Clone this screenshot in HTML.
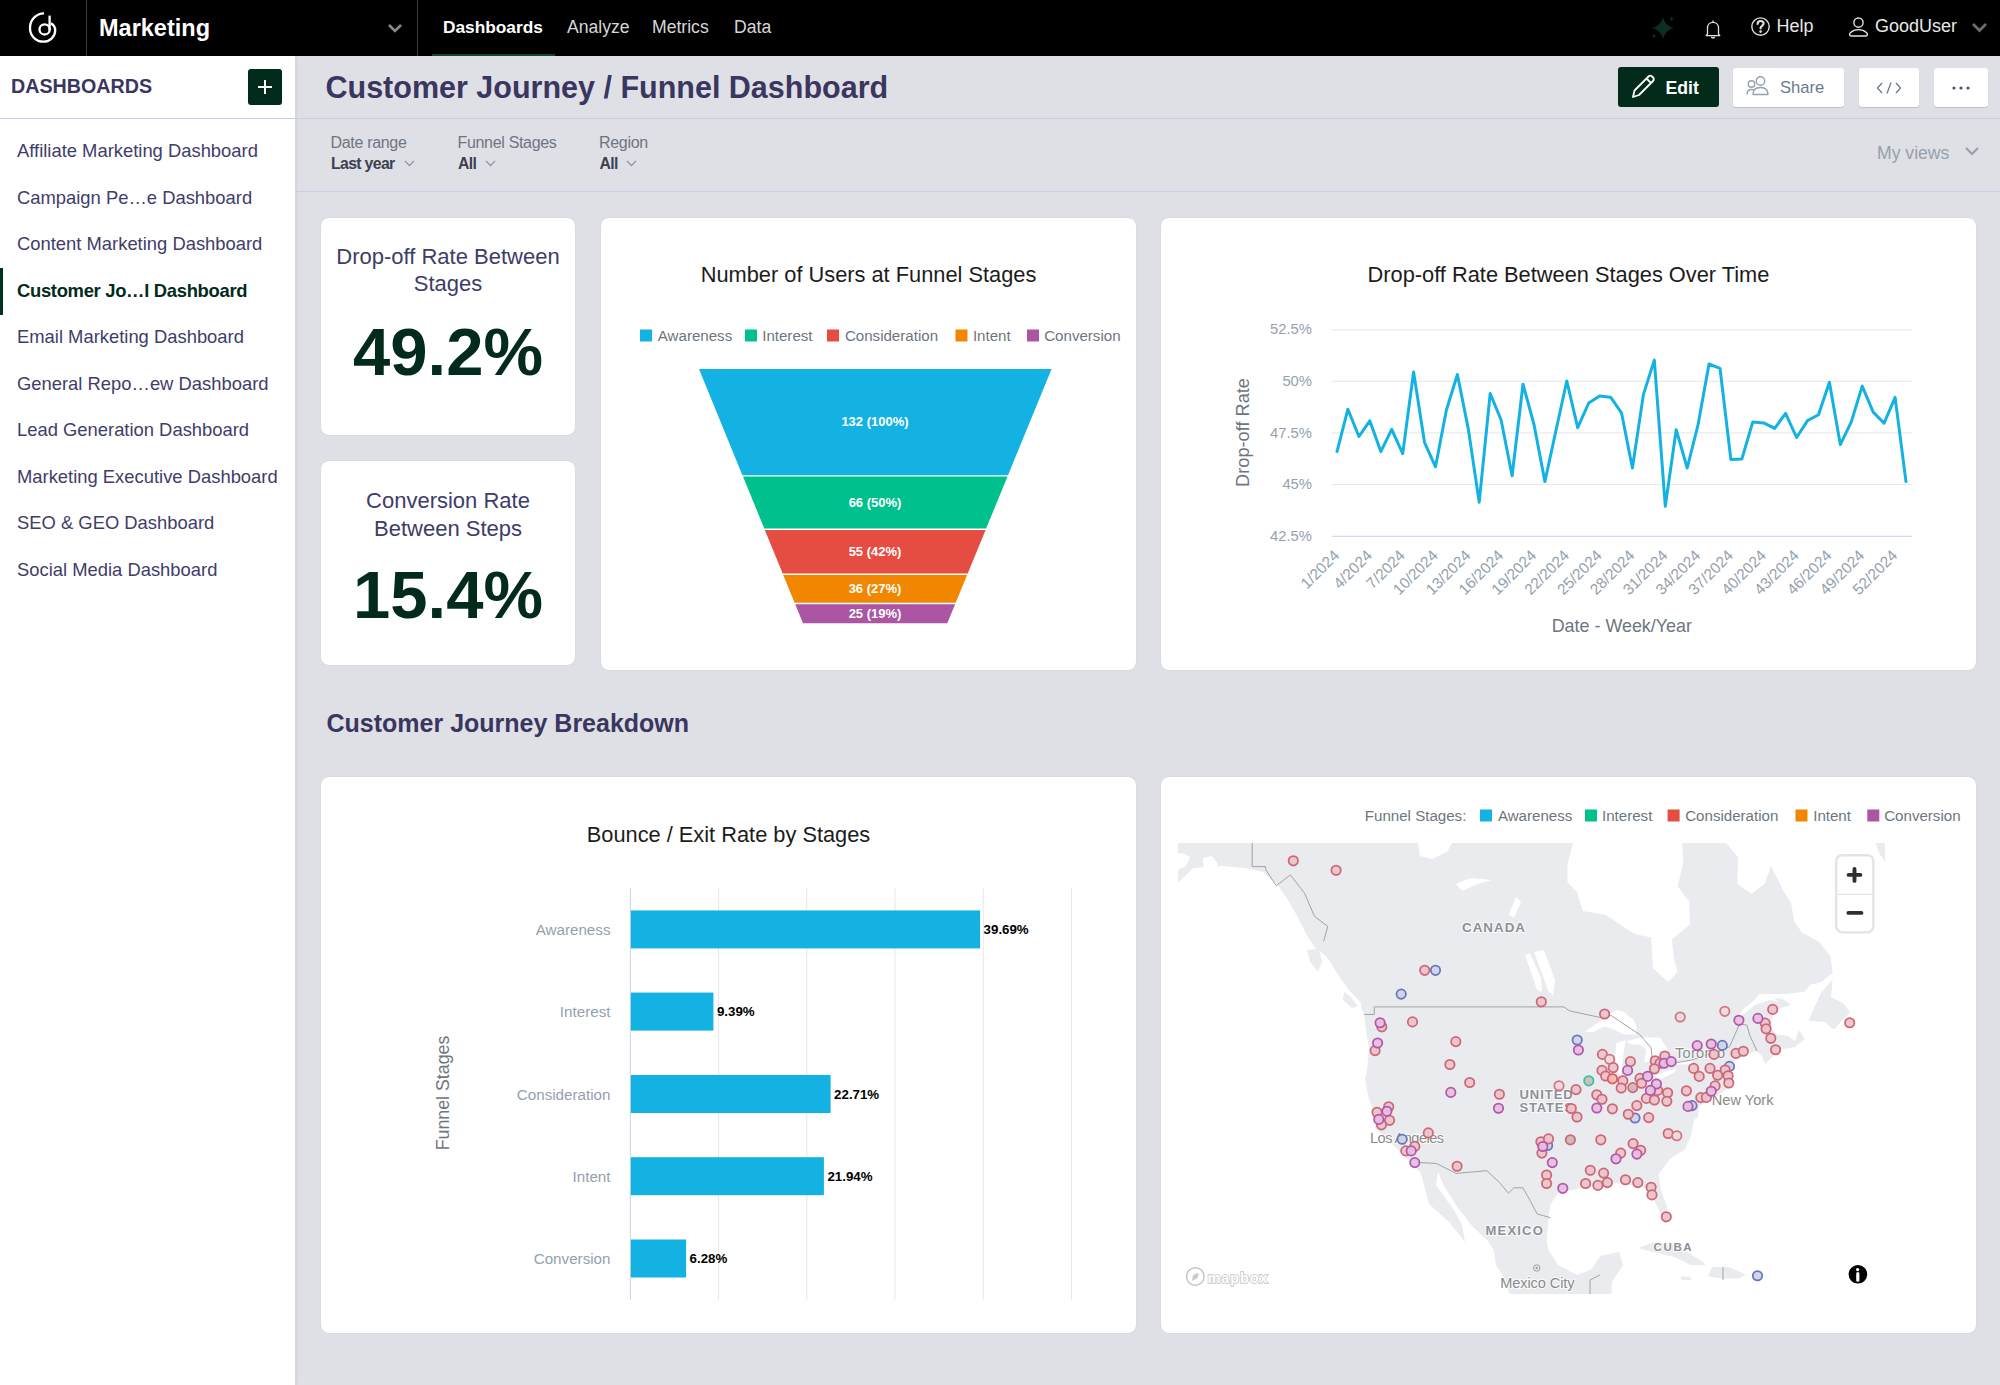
<!DOCTYPE html>
<html><head><meta charset="utf-8">
<style>
*{margin:0;padding:0;box-sizing:border-box}
html,body{width:2000px;height:1385px;overflow:hidden;background:#dfe0e6;font-family:"Liberation Sans",sans-serif}
.a{position:absolute;white-space:nowrap}
#top{position:absolute;left:0;top:0;width:2000px;height:56px;background:#000}
#side{position:absolute;left:0;top:56px;width:296px;height:1329px;background:#fff;border-right:1px solid #d6d7de;box-shadow:1px 0 2px rgba(0,0,0,0.06)}
.card{position:absolute;background:#fff;border-radius:8px;box-shadow:0 0 1px rgba(40,40,80,0.18)}
.nav{color:#d6d6d6;font-size:17.6px;line-height:17.6px;top:19px}
.si{left:17px;font-size:18.4px;line-height:18.4px;color:#3f3d69}
.flab{font-size:16px;line-height:16px;color:#6d7582;top:135.4px;letter-spacing:-0.32px}
.fval{font-size:15.8px;line-height:15.8px;color:#3c4150;font-weight:bold;top:155.9px;letter-spacing:-0.65px}
.ct{font-size:21.8px;line-height:22px;color:#1c1c1c;text-align:center}
.leg{font-size:14.8px;line-height:15px;color:#6d7680}
.sq{position:absolute;width:12px;height:12px}
.ax{font-size:14.5px;line-height:15px;color:#94a1ae}
</style></head><body>
<div id="top">
  <!-- logo -->
  <svg class="a" style="left:0;top:0" width="70" height="56" viewBox="0 0 70 56">
    <path d="M44 13.3 C36 13.3 30 20 30 28 C30 36 36 41.7 43.5 41.7 C50 41.7 55.2 36.5 55.2 30.5 C55.2 27 53.5 24.6 50.6 23.4" fill="none" stroke="#fff" stroke-width="2.3"/>
    <path d="M49.6 15.6 V30" fill="none" stroke="#fff" stroke-width="2.3"/>
    <circle cx="44.6" cy="29.4" r="5.1" fill="none" stroke="#fff" stroke-width="2.3"/>
  </svg>
  <div class="a" style="left:86px;top:0;width:1px;height:56px;background:#3a3a3a"></div>
  <div class="a" style="left:99px;top:16.9px;font-size:23.5px;line-height:23.5px;color:#fff;font-weight:bold">Marketing</div>
  <svg class="a" style="left:386px;top:21px" width="18" height="14" viewBox="0 0 18 14"><path d="M3 4 L9 10 L15 4" fill="none" stroke="#8a8a8a" stroke-width="2.6"/></svg>
  <div class="a" style="left:417px;top:0;width:1px;height:56px;background:#3a3a3a"></div>
  <div class="a nav" style="left:443px;color:#fff;font-weight:bold;font-size:17.3px">Dashboards</div>
  <div class="a" style="left:432px;top:54px;width:123px;height:2px;background:#0d4a30"></div>
  <div class="a nav" style="left:567px">Analyze</div>
  <div class="a nav" style="left:652px">Metrics</div>
  <div class="a nav" style="left:734px">Data</div>
  <!-- right icons -->
  <svg class="a" style="left:1640px;top:10px" width="45" height="40" viewBox="0 0 45 40">
    <path d="M23 7.5 Q25.2 15.8 33.8 18 Q25.2 20.2 23 28.8 Q20.8 20.2 12.2 18 Q20.8 15.8 23 7.5Z" fill="#0b2f21"/>
    <path d="M31.6 6.5 Q32 8.6 34 9 Q32 9.4 31.6 11.5 Q31.2 9.4 29.2 9 Q31.2 8.6 31.6 6.5Z" fill="#0b2f21"/>
    <path d="M14 23.8 Q14.4 25.6 16.2 26 Q14.4 26.4 14 28.2 Q13.6 26.4 11.8 26 Q13.6 25.6 14 23.8Z" fill="#0b2f21"/>
  </svg>
  <svg class="a" style="left:1702px;top:17px" width="22" height="24" viewBox="0 0 22 24">
    <path d="M5.5 17 V11 C5.5 7.6 7.8 5.3 11 5.3 C14.2 5.3 16.5 7.6 16.5 11 V17 L17.8 18.6 H4.2 Z" fill="none" stroke="#e0e0e0" stroke-width="1.3" stroke-linejoin="round"/>
    <path d="M11 3.4 V5.3" stroke="#e0e0e0" stroke-width="1.3"/>
    <path d="M9.3 19.8 A1.8 1.8 0 0 0 12.7 19.8" fill="none" stroke="#e0e0e0" stroke-width="1.3"/>
  </svg>
  <svg class="a" style="left:1749px;top:15px" width="23" height="23" viewBox="0 0 23 23">
    <circle cx="11.5" cy="11.6" r="8.7" fill="none" stroke="#e0e0e0" stroke-width="1.4"/>
    <path d="M8.6 9 C8.6 7 9.9 6 11.6 6 C13.3 6 14.6 7 14.6 8.6 C14.6 10.6 12 10.8 11.6 12.6 V13.4" fill="none" stroke="#e0e0e0" stroke-width="2.1" stroke-linecap="round"/>
    <circle cx="11.6" cy="16.6" r="1.3" fill="#e0e0e0"/>
  </svg>
  <div class="a nav" style="left:1776.5px;font-size:18px;line-height:18px;top:17px;color:#e8e8e8">Help</div>
  <svg class="a" style="left:1847px;top:15px" width="23" height="23" viewBox="0 0 23 23">
    <circle cx="11.5" cy="7.6" r="4.6" fill="none" stroke="#e0e0e0" stroke-width="1.4"/>
    <path d="M4.2 21 C2.2 21 2.2 19 3.6 17.6 C5.6 15.6 8.5 14.6 11.5 14.6 C14.5 14.6 17.4 15.6 19.4 17.6 C20.8 19 20.8 21 18.8 21 Z" fill="none" stroke="#e0e0e0" stroke-width="1.4" stroke-linejoin="round"/>
  </svg>
  <div class="a nav" style="left:1875px;font-size:18px;line-height:18px;top:17px;color:#e8e8e8">GoodUser</div>
  <svg class="a" style="left:1970px;top:20px" width="19" height="14" viewBox="0 0 19 14"><path d="M3 4 L9.5 10.5 L16 4" fill="none" stroke="#6e6e6e" stroke-width="2.7"/></svg>
</div>

<div id="side">
  <div class="a" style="left:11px;top:20.6px;font-size:19.7px;line-height:19.7px;color:#3a3660;font-weight:bold">DASHBOARDS</div>
  <div class="a" style="left:248px;top:13px;width:34px;height:36px;background:#032b1c;border-radius:3px"></div>
  <svg class="a" style="left:254px;top:20px" width="22" height="22" viewBox="0 0 22 22"><path d="M11 4 V18 M4 11 H18" stroke="#fff" stroke-width="2"/></svg>
  <div class="a" style="left:0;top:62px;width:295px;height:1px;background:#c9cde6"></div>
</div>
<!-- sidebar items (page coordinates) -->
<div class="a si" style="top:142.2px">Affiliate Marketing Dashboard</div>
<div class="a si" style="top:188.7px">Campaign Pe…e Dashboard</div>
<div class="a si" style="top:235.2px">Content Marketing Dashboard</div>
<div class="a" style="left:0;top:268px;width:3px;height:47px;background:#033220"></div>
<div class="a si" style="top:281.7px;color:#032b1c;font-weight:bold;letter-spacing:-0.3px">Customer Jo…l Dashboard</div>
<div class="a si" style="top:328.2px">Email Marketing Dashboard</div>
<div class="a si" style="top:374.7px">General Repo…ew Dashboard</div>
<div class="a si" style="top:421.2px">Lead Generation Dashboard</div>
<div class="a si" style="top:467.7px">Marketing Executive Dashboard</div>
<div class="a si" style="top:514.2px">SEO &amp; GEO Dashboard</div>
<div class="a si" style="top:560.7px">Social Media Dashboard</div>

<!-- header -->
<div class="a" style="left:296px;top:118px;width:1704px;height:1px;background:#c9cde6"></div>
<div class="a" style="left:296px;top:191px;width:1704px;height:1px;background:#c9cde6"></div>
<div class="a" style="left:325.5px;top:72px;font-size:30.5px;line-height:30.5px;color:#3a3660;font-weight:bold">Customer Journey / Funnel Dashboard</div>

<!-- buttons -->
<div class="a" style="left:1618px;top:67px;width:101px;height:40px;background:#032b1c;border-radius:3px"></div>
<svg class="a" style="left:1629px;top:72px" width="28" height="28" viewBox="0 0 28 28">
  <path d="M4 25 L5.5 18.5 L19.5 4.5 C20.5 3.5 22 3.5 23 4.5 L24 5.5 C25 6.5 25 8 24 9 L10 23 Z M17.5 6.5 L22 11" fill="none" stroke="#fff" stroke-width="1.8" stroke-linejoin="round"/>
</svg>
<div class="a" style="left:1665.5px;top:79.5px;font-size:17.7px;line-height:17.7px;color:#fff;font-weight:bold">Edit</div>
<div class="a" style="left:1733px;top:68px;width:111px;height:39px;background:#fff;border-radius:3px;box-shadow:0 1px 1px #b9c0cc"></div>
<svg class="a" style="left:1744px;top:74px" width="28" height="24" viewBox="0 0 28 24">
  <circle cx="16.5" cy="7" r="4.2" fill="none" stroke="#94a1ae" stroke-width="1.4"/>
  <path d="M9 20.5 C9 15.5 12 13.5 16.5 13.5 C21 13.5 24 15.5 24 20.5 Z" fill="none" stroke="#94a1ae" stroke-width="1.4" stroke-linejoin="round"/>
  <circle cx="7.5" cy="10" r="3.2" fill="none" stroke="#94a1ae" stroke-width="1.4"/>
  <path d="M3 20.5 C3 17 4.8 15.5 7.5 15.5 C8.3 15.5 9 15.6 9.6 15.8" fill="none" stroke="#94a1ae" stroke-width="1.4"/>
</svg>
<div class="a" style="left:1780px;top:80px;font-size:16.6px;line-height:16.6px;color:#6b7a8c">Share</div>
<div class="a" style="left:1859px;top:68px;width:60px;height:39px;background:#fff;border-radius:3px;box-shadow:0 1px 1px #b9c0cc"></div>
<svg class="a" style="left:1875px;top:80px" width="28" height="16" viewBox="0 0 28 16"><path d="M7 3 L2.5 8 L7 13 M21 3 L25.5 8 L21 13 M16 2.5 L12 13.5" fill="none" stroke="#6b7a8c" stroke-width="1.3"/></svg>
<div class="a" style="left:1934px;top:68px;width:54px;height:39px;background:#fff;border-radius:3px;box-shadow:0 1px 1px #b9c0cc"></div>
<svg class="a" style="left:1950px;top:84px" width="22" height="8" viewBox="0 0 22 8"><circle cx="4" cy="4" r="1.6" fill="#4a5566"/><circle cx="11" cy="4" r="1.6" fill="#4a5566"/><circle cx="18" cy="4" r="1.6" fill="#4a5566"/></svg>

<!-- filters -->
<div class="a flab" style="left:330.5px">Date range</div>
<div class="a fval" style="left:331px">Last year</div>
<svg class="a" style="left:403px;top:158px" width="13" height="10" viewBox="0 0 13 10"><path d="M2 3 L6.5 7.5 L11 3" fill="none" stroke="#8e9aa8" stroke-width="1.3"/></svg>
<div class="a flab" style="left:457.5px">Funnel Stages</div>
<div class="a fval" style="left:458px">All</div>
<svg class="a" style="left:484px;top:158px" width="13" height="10" viewBox="0 0 13 10"><path d="M2 3 L6.5 7.5 L11 3" fill="none" stroke="#8e9aa8" stroke-width="1.3"/></svg>
<div class="a flab" style="left:599px">Region</div>
<div class="a fval" style="left:599.5px">All</div>
<svg class="a" style="left:625px;top:158px" width="13" height="10" viewBox="0 0 13 10"><path d="M2 3 L6.5 7.5 L11 3" fill="none" stroke="#8e9aa8" stroke-width="1.3"/></svg>
<div class="a" style="left:1877px;top:145px;font-size:17.6px;line-height:17.6px;color:#94a1ae">My views</div>
<svg class="a" style="left:1963px;top:145px" width="18" height="12" viewBox="0 0 18 12"><path d="M3 3 L9 9 L15 3" fill="none" stroke="#94a1ae" stroke-width="2.2"/></svg>

<!-- KPI cards -->
<div class="card" style="left:321px;top:218px;width:254px;height:217px"></div>
<div class="a" style="left:321px;top:244.3px;width:254px;text-align:center;font-size:22px;line-height:26.8px;color:#3e3c68;white-space:normal">Drop-off Rate Between<br>Stages</div>
<div class="a" style="left:321px;top:318px;width:254px;text-align:center;font-size:67px;line-height:67px;color:#032b1c;font-weight:bold">49.2%</div>
<div class="card" style="left:321px;top:461px;width:254px;height:204px"></div>
<div class="a" style="left:321px;top:487.3px;width:254px;text-align:center;font-size:22px;line-height:27.2px;color:#3e3c68;white-space:normal">Conversion Rate<br>Between Steps</div>
<div class="a" style="left:321px;top:561px;width:254px;text-align:center;font-size:67px;line-height:67px;color:#032b1c;font-weight:bold">15.4%</div>

<!-- funnel card -->
<div class="card" style="left:601px;top:218px;width:535px;height:452px"></div>
<!-- line card -->
<div class="card" style="left:1161px;top:218px;width:815px;height:452px"></div>

<div class="a" style="left:326.5px;top:711px;font-size:25px;line-height:25px;color:#3a3660;font-weight:bold">Customer Journey Breakdown</div>
<!-- bar card -->
<div class="card" style="left:321px;top:777px;width:815px;height:556px"></div>
<!-- map card -->
<div class="card" style="left:1161px;top:777px;width:815px;height:556px"></div>

<svg class="a" style="left:0;top:0" width="2000" height="1385" viewBox="0 0 2000 1385">
<text x="868.5" y="282.2" text-anchor="middle" font-size="21.8" fill="#1c1c1c" font-family="Liberation Sans, sans-serif">Number of Users at Funnel Stages</text>
<rect x="640" y="329.5" width="12" height="12" fill="#14b2e2"/>
<text x="657.8000000000001" y="341.2" font-size="15.1" fill="#6d7680" font-family="Liberation Sans, sans-serif">Awareness</text>
<rect x="745" y="329.5" width="12" height="12" fill="#00c18d"/>
<text x="762.2" y="341.2" font-size="15.1" fill="#6d7680" font-family="Liberation Sans, sans-serif">Interest</text>
<rect x="827" y="329.5" width="12" height="12" fill="#e54d42"/>
<text x="844.9000000000001" y="341.2" font-size="15.1" fill="#6d7680" font-family="Liberation Sans, sans-serif">Consideration</text>
<rect x="955.5" y="329.5" width="12" height="12" fill="#f18600"/>
<text x="972.9000000000001" y="341.2" font-size="15.1" fill="#6d7680" font-family="Liberation Sans, sans-serif">Intent</text>
<rect x="1027" y="329.5" width="12" height="12" fill="#ab55a3"/>
<text x="1044.2" y="341.2" font-size="15.1" fill="#6d7680" font-family="Liberation Sans, sans-serif">Conversion</text>
<polygon points="699.0,369 1051.6,369 1008.0,475.2 742.4,475.2" fill="#14b2e2"/>
<text x="875" y="426.0" text-anchor="middle" font-size="13" font-weight="bold" fill="#fff" font-family="Liberation Sans, sans-serif">132 (100%)</text>
<polygon points="743.0,476.6 1007.5,476.6 986.1,528.6 764.3,528.6" fill="#00c18d"/>
<text x="875" y="506.5" text-anchor="middle" font-size="13" font-weight="bold" fill="#fff" font-family="Liberation Sans, sans-serif">66 (50%)</text>
<polygon points="764.8,530.0 985.6,530.0 967.7,573.6 782.7,573.6" fill="#e54d42"/>
<text x="875" y="555.7" text-anchor="middle" font-size="13" font-weight="bold" fill="#fff" font-family="Liberation Sans, sans-serif">55 (42%)</text>
<polygon points="783.2,575.0 967.1,575.0 955.7,602.8 794.6,602.8" fill="#f18600"/>
<text x="875" y="592.8" text-anchor="middle" font-size="13" font-weight="bold" fill="#fff" font-family="Liberation Sans, sans-serif">36 (27%)</text>
<polygon points="795.2,604.2 955.1,604.2 947.3,623.3 803.0,623.3" fill="#ab55a3"/>
<text x="875" y="617.6" text-anchor="middle" font-size="13" font-weight="bold" fill="#fff" font-family="Liberation Sans, sans-serif">25 (19%)</text>
<text x="1568.5" y="282.2" text-anchor="middle" font-size="21.8" fill="#1c1c1c" font-family="Liberation Sans, sans-serif">Drop-off Rate Between Stages Over Time</text>
<rect x="1331.7" y="329.3" width="580.1" height="1" fill="#e6e7ea"/>
<rect x="1331.7" y="380.8" width="580.1" height="1" fill="#e6e7ea"/>
<rect x="1331.7" y="432.4" width="580.1" height="1" fill="#e6e7ea"/>
<rect x="1331.7" y="484.1" width="580.1" height="1" fill="#e6e7ea"/>
<rect x="1331.7" y="535.8" width="580.1" height="1" fill="#ccd2e8"/>
<text x="1312" y="334.4" text-anchor="end" font-size="14.8" fill="#94a1ae" font-family="Liberation Sans, sans-serif">52.5%</text>
<text x="1312" y="385.9" text-anchor="end" font-size="14.8" fill="#94a1ae" font-family="Liberation Sans, sans-serif">50%</text>
<text x="1312" y="437.5" text-anchor="end" font-size="14.8" fill="#94a1ae" font-family="Liberation Sans, sans-serif">47.5%</text>
<text x="1312" y="489.2" text-anchor="end" font-size="14.8" fill="#94a1ae" font-family="Liberation Sans, sans-serif">45%</text>
<text x="1312" y="540.9" text-anchor="end" font-size="14.8" fill="#94a1ae" font-family="Liberation Sans, sans-serif">42.5%</text>
<text x="0" y="0" transform="translate(1248.8,432.5) rotate(-90)" text-anchor="middle" font-size="18.2" fill="#6d7680" font-family="Liberation Sans, sans-serif">Drop-off Rate</text>
<polyline points="1337.0,451.6 1347.9,409.2 1358.9,436.5 1369.8,420.8 1380.8,451.6 1391.7,429.4 1402.7,453.6 1413.6,372.0 1424.5,442.3 1435.5,466.8 1446.4,410.0 1457.4,374.5 1468.3,428.9 1479.2,502.2 1490.2,393.5 1501.1,420.0 1512.1,475.8 1523.0,384.2 1534.0,424.5 1544.9,481.6 1555.8,431.3 1566.8,381.0 1577.7,427.7 1588.7,403.0 1599.6,395.9 1610.6,397.2 1621.5,412.8 1632.4,468.0 1643.4,394.6 1654.3,360.1 1665.3,506.3 1676.2,429.7 1687.2,468.0 1698.1,424.5 1709.0,364.0 1720.0,368.3 1730.9,459.6 1741.9,458.9 1752.8,421.9 1763.8,422.9 1774.7,428.4 1785.6,413.4 1796.6,437.5 1807.5,420.6 1818.5,414.7 1829.4,382.2 1840.3,444.6 1851.3,421.9 1862.2,386.1 1873.2,412.1 1884.1,423.2 1895.1,397.4 1906.0,481.6" fill="none" stroke="#14b2e2" stroke-width="3" stroke-linejoin="round" stroke-linecap="round"/>
<text x="0" y="0" transform="translate(1340.2,556.5) rotate(-45)" text-anchor="end" font-size="15.4" fill="#94a1ae" font-family="Liberation Sans, sans-serif">1/2024</text>
<text x="0" y="0" transform="translate(1373.0,556.5) rotate(-45)" text-anchor="end" font-size="15.4" fill="#94a1ae" font-family="Liberation Sans, sans-serif">4/2024</text>
<text x="0" y="0" transform="translate(1405.9,556.5) rotate(-45)" text-anchor="end" font-size="15.4" fill="#94a1ae" font-family="Liberation Sans, sans-serif">7/2024</text>
<text x="0" y="0" transform="translate(1438.7,556.5) rotate(-45)" text-anchor="end" font-size="15.4" fill="#94a1ae" font-family="Liberation Sans, sans-serif">10/2024</text>
<text x="0" y="0" transform="translate(1471.5,556.5) rotate(-45)" text-anchor="end" font-size="15.4" fill="#94a1ae" font-family="Liberation Sans, sans-serif">13/2024</text>
<text x="0" y="0" transform="translate(1504.3,556.5) rotate(-45)" text-anchor="end" font-size="15.4" fill="#94a1ae" font-family="Liberation Sans, sans-serif">16/2024</text>
<text x="0" y="0" transform="translate(1537.2,556.5) rotate(-45)" text-anchor="end" font-size="15.4" fill="#94a1ae" font-family="Liberation Sans, sans-serif">19/2024</text>
<text x="0" y="0" transform="translate(1570.0,556.5) rotate(-45)" text-anchor="end" font-size="15.4" fill="#94a1ae" font-family="Liberation Sans, sans-serif">22/2024</text>
<text x="0" y="0" transform="translate(1602.8,556.5) rotate(-45)" text-anchor="end" font-size="15.4" fill="#94a1ae" font-family="Liberation Sans, sans-serif">25/2024</text>
<text x="0" y="0" transform="translate(1635.6,556.5) rotate(-45)" text-anchor="end" font-size="15.4" fill="#94a1ae" font-family="Liberation Sans, sans-serif">28/2024</text>
<text x="0" y="0" transform="translate(1668.5,556.5) rotate(-45)" text-anchor="end" font-size="15.4" fill="#94a1ae" font-family="Liberation Sans, sans-serif">31/2024</text>
<text x="0" y="0" transform="translate(1701.3,556.5) rotate(-45)" text-anchor="end" font-size="15.4" fill="#94a1ae" font-family="Liberation Sans, sans-serif">34/2024</text>
<text x="0" y="0" transform="translate(1734.1,556.5) rotate(-45)" text-anchor="end" font-size="15.4" fill="#94a1ae" font-family="Liberation Sans, sans-serif">37/2024</text>
<text x="0" y="0" transform="translate(1767.0,556.5) rotate(-45)" text-anchor="end" font-size="15.4" fill="#94a1ae" font-family="Liberation Sans, sans-serif">40/2024</text>
<text x="0" y="0" transform="translate(1799.8,556.5) rotate(-45)" text-anchor="end" font-size="15.4" fill="#94a1ae" font-family="Liberation Sans, sans-serif">43/2024</text>
<text x="0" y="0" transform="translate(1832.6,556.5) rotate(-45)" text-anchor="end" font-size="15.4" fill="#94a1ae" font-family="Liberation Sans, sans-serif">46/2024</text>
<text x="0" y="0" transform="translate(1865.4,556.5) rotate(-45)" text-anchor="end" font-size="15.4" fill="#94a1ae" font-family="Liberation Sans, sans-serif">49/2024</text>
<text x="0" y="0" transform="translate(1898.3,556.5) rotate(-45)" text-anchor="end" font-size="15.4" fill="#94a1ae" font-family="Liberation Sans, sans-serif">52/2024</text>
<text x="1621.8" y="632" text-anchor="middle" font-size="17.9" fill="#6d7680" font-family="Liberation Sans, sans-serif">Date - Week/Year</text>
<text x="728.5" y="841.5" text-anchor="middle" font-size="21.8" fill="#1c1c1c" font-family="Liberation Sans, sans-serif">Bounce / Exit Rate by Stages</text>
<rect x="718.1" y="888.2" width="1" height="411.4" fill="#e6e7ea"/>
<rect x="806.3" y="888.2" width="1" height="411.4" fill="#e6e7ea"/>
<rect x="894.5" y="888.2" width="1" height="411.4" fill="#e6e7ea"/>
<rect x="982.7" y="888.2" width="1" height="411.4" fill="#e6e7ea"/>
<rect x="1070.9" y="888.2" width="1" height="411.4" fill="#e6e7ea"/>
<rect x="629.9" y="888.2" width="1" height="411.4" fill="#ccd2e8"/>
<rect x="630.8" y="910.4" width="349.3" height="38" fill="#14b2e2"/>
<text x="610.5" y="935.0" text-anchor="end" font-size="15.2" fill="#94a1ae" font-family="Liberation Sans, sans-serif">Awareness</text>
<text x="983.6" y="934.0" font-size="13.3" font-weight="bold" fill="#000" font-family="Liberation Sans, sans-serif">39.69%</text>
<rect x="630.8" y="992.6" width="82.6" height="38" fill="#14b2e2"/>
<text x="610.5" y="1017.2" text-anchor="end" font-size="15.2" fill="#94a1ae" font-family="Liberation Sans, sans-serif">Interest</text>
<text x="716.9" y="1016.2" font-size="13.3" font-weight="bold" fill="#000" font-family="Liberation Sans, sans-serif">9.39%</text>
<rect x="630.8" y="1075.0" width="199.8" height="38" fill="#14b2e2"/>
<text x="610.5" y="1099.5" text-anchor="end" font-size="15.2" fill="#94a1ae" font-family="Liberation Sans, sans-serif">Consideration</text>
<text x="834.1" y="1098.5" font-size="13.3" font-weight="bold" fill="#000" font-family="Liberation Sans, sans-serif">22.71%</text>
<rect x="630.8" y="1157.2" width="193.1" height="38" fill="#14b2e2"/>
<text x="610.5" y="1181.8" text-anchor="end" font-size="15.2" fill="#94a1ae" font-family="Liberation Sans, sans-serif">Intent</text>
<text x="827.4" y="1180.8" font-size="13.3" font-weight="bold" fill="#000" font-family="Liberation Sans, sans-serif">21.94%</text>
<rect x="630.8" y="1239.5" width="55.3" height="38" fill="#14b2e2"/>
<text x="610.5" y="1264.1" text-anchor="end" font-size="15.2" fill="#94a1ae" font-family="Liberation Sans, sans-serif">Conversion</text>
<text x="689.6" y="1263.1" font-size="13.3" font-weight="bold" fill="#000" font-family="Liberation Sans, sans-serif">6.28%</text>
<text x="0" y="0" transform="translate(449,1093) rotate(-90)" text-anchor="middle" font-size="17.8" fill="#6d7680" font-family="Liberation Sans, sans-serif">Funnel Stages</text>
</svg>
<svg class="a" style="left:0;top:0" width="2000" height="1385" viewBox="0 0 2000 1385">
<text x="1364.8" y="821" font-size="15.1" fill="#6d7680" font-family="Liberation Sans, sans-serif">Funnel Stages:</text>
<rect x="1480" y="809.5" width="12" height="12" fill="#14b2e2"/>
<text x="1497.9" y="821" font-size="15.1" fill="#6d7680" font-family="Liberation Sans, sans-serif">Awareness</text>
<rect x="1585" y="809.5" width="12" height="12" fill="#00c18d"/>
<text x="1602.0" y="821" font-size="15.1" fill="#6d7680" font-family="Liberation Sans, sans-serif">Interest</text>
<rect x="1667.6" y="809.5" width="12" height="12" fill="#e54d42"/>
<text x="1685.2" y="821" font-size="15.1" fill="#6d7680" font-family="Liberation Sans, sans-serif">Consideration</text>
<rect x="1795.5" y="809.5" width="12" height="12" fill="#f18600"/>
<text x="1813.2" y="821" font-size="15.1" fill="#6d7680" font-family="Liberation Sans, sans-serif">Intent</text>
<rect x="1867.3" y="809.5" width="12" height="12" fill="#ab55a3"/>
<text x="1884.2" y="821" font-size="15.1" fill="#6d7680" font-family="Liberation Sans, sans-serif">Conversion</text>
<defs><clipPath id="mc"><rect x="1178" y="843" width="707" height="451"/></clipPath></defs>
<g clip-path="url(#mc)">
<rect x="1178" y="843" width="707" height="451" fill="#e9ebef"/>
<polygon points="1170,884 1178,882.4 1185,876 1192.5,868.4 1205,867 1222,866 1245,868 1262.7,872 1276.8,884 1286.1,897 1295.5,913 1307.2,936 1315.4,948 1324.7,955 1330.6,962 1336.4,972.5 1348.1,988.9 1361,1003 1361,1008 1364,1014 1366,1031 1369,1048 1367,1070 1365,1078 1368,1096 1373,1110 1375,1128 1393,1145 1409,1161 1420,1172 1422,1177 1429,1204 1449,1222 1458,1233 1465,1242 1487,1240 1494,1251 1495.8,1265 1503,1276 1512,1300 1170,1300" fill="#fff"/>
<polygon points="1170,855 1182,853 1190,857 1186,866 1178,870 1170,872" fill="#fff"/>
<polygon points="1203,858 1212,856 1218,864 1214,871 1204,872" fill="#fff"/>
<polygon points="1438,1171.6 1444,1186 1458,1208 1472,1226 1487,1240 1494,1251 1465,1242 1462,1225 1454,1210 1443,1195 1436,1185" fill="#fff"/>
<polygon points="1720.7,836 1875.5,836 1875.5,843 1884.8,862 1890,862 1890,1300 1611,1300 1612,1282 1623,1265 1619,1252 1600,1256 1592,1269 1577,1275 1558,1265 1548.5,1250 1546.6,1240.5 1548.5,1217.7 1550.4,1204.4 1558,1193 1577,1189 1605.5,1183.5 1620.7,1183.5 1641.6,1186.4 1651,1193 1658.7,1210 1664.4,1223.4 1670,1219.6 1666,1204 1660.6,1189 1658.7,1174 1670,1159 1685,1149 1691,1136 1694,1120 1698,1117 1699,1106 1712,1100 1721,1093 1734,1084 1727.5,1067.5 1735,1060 1746.3,1054 1756.8,1051 1762,1056 1765,1064 1780,1049.5 1795,1047.3 1804.8,1039 1798.8,1030 1795,1041.3 1787.5,1036 1777,1034.5 1771,1028.5 1772.5,1016.5 1778.5,1009 1790.5,1005 1770,1000 1755,1005 1742.5,1015 1731.3,1027 1742.5,1009.8 1754.5,1000 1759,994 1787.5,994 1804.8,991.8 1810,985 1821.7,981.8 1832.7,973 1830.5,956.6 1819.5,942.3 1802,932.4 1794.3,921.4 1791,902.8 1783.3,890.7 1773.4,870.9 1771.2,865.4 1764.6,884.1 1751.5,894 1737.2,884.1 1738.3,857.8" fill="#fff"/>
<polygon points="1575,836 1681.5,836 1683.4,861.6 1677.7,886.3 1689.1,901.5 1690,924.3 1672,939.5 1673.9,958.5 1677.7,971.8 1668.2,982.3 1653,968 1651.1,937.6 1634,933.8 1605.5,914.8 1582.7,911 1577,892 1567.5,882.5 1567.5,863.5" fill="#fff"/>
<polygon points="1418,843 1452,843 1447,852 1432,859 1420,856" fill="#fff"/>
<polygon points="1456,884 1470,878 1492,880 1478,884 1462,891" fill="#fff"/>
<polygon points="1516,897 1521,902 1514,918 1509,914" fill="#fff"/>
<polygon points="1525,955 1530,953 1541,978 1542,992 1537,990 1531,972" fill="#fff"/>
<polygon points="1534,952 1544,950 1555,980 1553,996 1548,990" fill="#fff"/>
<polygon points="1584.8,1032 1596,1024 1608,1016 1616,1009.6 1624,1012 1633.6,1020 1636.8,1027.2 1636,1034.4 1624,1034.4 1612,1028.8 1604,1026.4 1593.6,1032" fill="#fff"/>
<polygon points="1616,1043.2 1625.6,1040 1623.2,1056 1620.8,1076 1617.6,1072 1615.2,1056" fill="#fff"/>
<polygon points="1626.4,1041.6 1640,1037.6 1660,1037.6 1668,1049.6 1664,1056 1652,1060.8 1644,1062.4 1646.4,1049.6 1640,1044.8 1632,1044.8" fill="#fff"/>
<polygon points="1654.4,1076.8 1664,1072 1676,1068.8 1675.2,1072 1660.8,1079.2" fill="#fff"/>
<polygon points="1676,1062.4 1692,1060.8 1692.8,1064 1677.6,1064.8" fill="#fff"/>
<polygon points="1808.5,1021 1812.3,1012 1821.3,992.5 1832.5,979.8 1831,997 1843.8,1003.8 1850.5,1012 1840,1022.5 1835.5,1028.5 1832.5,1029.3 1825,1021.8" fill="#e9ebef"/>
<polygon points="1774,998 1782,998.5 1790.5,1004 1788,1006 1778,1002" fill="#e9ebef"/>
<polygon points="1875.5,843 1885,843 1885,860 1880,855" fill="#e9ebef"/>
<polygon points="1637.8,1248.1 1653,1242.4 1672,1244.3 1687.2,1251.9 1702.4,1261.4 1706.2,1265.2 1691,1265.2 1675.8,1257.6 1653,1251.9" fill="#e9ebef"/>
<polygon points="1711.9,1267.1 1729,1267.1 1746.1,1274.7 1738.5,1278.5 1721.4,1278.5 1708.1,1276.6" fill="#e9ebef"/>
<polygon points="1680,1276 1690,1277 1692,1280 1682,1280" fill="#e9ebef"/>
<polygon points="1344,992 1350,996 1358,1006 1352,1008 1343,1000" fill="#e9ebef"/>
<polygon points="1307,950 1319,949 1322,962 1318,972 1310,962" fill="#e9ebef"/>
<polyline points="1252.2,843 1252.2,866.6 1265.5,866.6 1266,870 1276.3,885.7 1290.4,874.9 1304.5,893.1 1314.5,916.4 1327.8,926.4 1323.6,941.3" fill="none" stroke="#a3a3a3" stroke-width="1"/>
<polyline points="1364,1014.4 1374.3,1014.4 1374.3,1006.9 1563.7,1006.9 1569.4,1010.8 1599.8,1017.4 1611.2,1015.5 1639.7,1034.5 1651.1,1047.8 1652,1056 1653,1063" fill="none" stroke="#a3a3a3" stroke-width="1"/>
<polyline points="1676.1,1062.8 1692,1059.9 1729.5,1046.9 1739.7,1023.8 1746.9,1025.2 1749.8,1035.3 1757,1051.2" fill="none" stroke="#a3a3a3" stroke-width="1"/>
<polyline points="1420.2,1162.6 1436.4,1163.5 1456.2,1173.4 1486.8,1170.7 1499.4,1182.4 1508.4,1193.2 1513.8,1187.8 1522.8,1187.8 1530,1200.4 1537.1,1213.9 1550.4,1217.7" fill="none" stroke="#a3a3a3" stroke-width="1"/>
<polyline points="1590,1294 1590,1280 1600,1275" fill="none" stroke="#a3a3a3" stroke-width="1"/>
<polyline points="1723,1267 1723,1280" fill="none" stroke="#a3a3a3" stroke-width="1"/>
<text x="1462" y="932.3" font-size="13.4" font-weight="bold" letter-spacing="1.0" fill="#8c9096" fill-opacity="1" stroke="#fff" stroke-width="2" stroke-opacity="0.8" paint-order="stroke" text-anchor="start" font-family="Liberation Sans, sans-serif">CANADA</text>
<text x="1519.5" y="1099.4" font-size="13" font-weight="bold" letter-spacing="0.95" fill="#8c9096" fill-opacity="1" stroke="#fff" stroke-width="2" stroke-opacity="0.8" paint-order="stroke" text-anchor="start" font-family="Liberation Sans, sans-serif">UNITED</text>
<text x="1519.5" y="1112.1" font-size="13" font-weight="bold" letter-spacing="0.8" fill="#8c9096" fill-opacity="1" stroke="#fff" stroke-width="2" stroke-opacity="0.8" paint-order="stroke" text-anchor="start" font-family="Liberation Sans, sans-serif">STATES</text>
<text x="1485.5" y="1235.4" font-size="13" font-weight="bold" letter-spacing="1.2" fill="#8c9096" fill-opacity="1" stroke="#fff" stroke-width="2" stroke-opacity="0.8" paint-order="stroke" text-anchor="start" font-family="Liberation Sans, sans-serif">MEXICO</text>
<text x="1653.5" y="1251.1" font-size="11.5" font-weight="bold" letter-spacing="1.65" fill="#8c9096" fill-opacity="1" stroke="#fff" stroke-width="2" stroke-opacity="0.8" paint-order="stroke" text-anchor="start" font-family="Liberation Sans, sans-serif">CUBA</text>
<text x="1675" y="1057.8" font-size="14.6" letter-spacing="0.25" fill="#8a8a8a" fill-opacity="1" stroke="#fff" stroke-width="2" stroke-opacity="0.8" paint-order="stroke" text-anchor="start" font-family="Liberation Sans, sans-serif">Toronto</text>
<text x="1711.8" y="1104.8" font-size="14.6" letter-spacing="0" fill="#8a8a8a" fill-opacity="1" stroke="#fff" stroke-width="2" stroke-opacity="0.8" paint-order="stroke" text-anchor="start" font-family="Liberation Sans, sans-serif">New York</text>
<text x="1370" y="1143.4" font-size="14.6" letter-spacing="-0.55" fill="#8a8a8a" fill-opacity="1" stroke="#fff" stroke-width="2" stroke-opacity="0.8" paint-order="stroke" text-anchor="start" font-family="Liberation Sans, sans-serif">Los Angeles</text>
<text x="1500.2" y="1287.5" font-size="14.6" letter-spacing="-0.1" fill="#8a8a8a" fill-opacity="1" stroke="#fff" stroke-width="2" stroke-opacity="0.8" paint-order="stroke" text-anchor="start" font-family="Liberation Sans, sans-serif">Mexico City</text>
<circle cx="1536.7" cy="1268" r="3.2" fill="none" stroke="#a0a0a0" stroke-width="1"/><circle cx="1536.7" cy="1268" r="1.2" fill="#a0a0a0"/>
<circle cx="1401.2" cy="994.1" r="4.7" fill="#d2d3e6" fill-opacity="0.95" stroke="#6577bd" stroke-width="1.75"/>
<circle cx="1435.5" cy="970.3" r="4.7" fill="#d2d3e6" fill-opacity="0.95" stroke="#6577bd" stroke-width="1.75"/>
<circle cx="1577.2" cy="1040.0" r="4.7" fill="#d2d3e6" fill-opacity="0.95" stroke="#6577bd" stroke-width="1.75"/>
<circle cx="1588.8" cy="1080.8" r="4.7" fill="#d6b8b9" fill-opacity="0.95" stroke="#35c4a3" stroke-width="1.75"/>
<circle cx="1722.3" cy="1045.4" r="4.7" fill="#d2d3e6" fill-opacity="0.95" stroke="#6577bd" stroke-width="1.75"/>
<circle cx="1729.5" cy="1066.4" r="4.7" fill="#d2d3e6" fill-opacity="0.95" stroke="#6577bd" stroke-width="1.75"/>
<circle cx="1692.0" cy="1105.6" r="4.7" fill="#d2d3e6" fill-opacity="0.95" stroke="#6577bd" stroke-width="1.75"/>
<circle cx="1402.2" cy="1139.2" r="4.7" fill="#d2d3e6" fill-opacity="0.95" stroke="#6577bd" stroke-width="1.75"/>
<circle cx="1635.0" cy="1118.0" r="4.7" fill="#d2d3e6" fill-opacity="0.95" stroke="#6577bd" stroke-width="1.75"/>
<circle cx="1547.6" cy="1145.5" r="4.7" fill="#d2d3e6" fill-opacity="0.95" stroke="#6577bd" stroke-width="1.75"/>
<circle cx="1757.5" cy="1275.7" r="4.7" fill="#d2d3e6" fill-opacity="0.95" stroke="#6577bd" stroke-width="1.75"/>
<circle cx="1293.3" cy="860.8" r="4.7" fill="#eac4cb" fill-opacity="0.95" stroke="#cf6676" stroke-width="1.75"/>
<circle cx="1336.1" cy="870.2" r="4.7" fill="#eac4cb" fill-opacity="0.95" stroke="#cf6676" stroke-width="1.75"/>
<circle cx="1381.8" cy="1026.8" r="4.7" fill="#eac4cb" fill-opacity="0.95" stroke="#cf6676" stroke-width="1.75"/>
<circle cx="1412.5" cy="1021.9" r="4.7" fill="#eac4cb" fill-opacity="0.95" stroke="#cf6676" stroke-width="1.75"/>
<circle cx="1375.1" cy="1050.6" r="4.7" fill="#eac4cb" fill-opacity="0.95" stroke="#cf6676" stroke-width="1.75"/>
<circle cx="1424.7" cy="970.3" r="4.7" fill="#eac4cb" fill-opacity="0.95" stroke="#cf6676" stroke-width="1.75"/>
<circle cx="1455.8" cy="1041.6" r="4.7" fill="#eac4cb" fill-opacity="0.95" stroke="#cf6676" stroke-width="1.75"/>
<circle cx="1449.9" cy="1064.5" r="4.7" fill="#eac4cb" fill-opacity="0.95" stroke="#cf6676" stroke-width="1.75"/>
<circle cx="1541.3" cy="1001.8" r="4.7" fill="#eac4cb" fill-opacity="0.95" stroke="#cf6676" stroke-width="1.75"/>
<circle cx="1604.6" cy="1014.0" r="4.7" fill="#eac4cb" fill-opacity="0.95" stroke="#cf6676" stroke-width="1.75"/>
<circle cx="1680.2" cy="1017.0" r="4.7" fill="#efd9de" fill-opacity="0.95" stroke="#d5747f" stroke-width="1.75"/>
<circle cx="1724.8" cy="1011.3" r="4.7" fill="#efd9de" fill-opacity="0.95" stroke="#d5747f" stroke-width="1.75"/>
<circle cx="1772.7" cy="1009.4" r="4.7" fill="#eac4cb" fill-opacity="0.95" stroke="#cf6676" stroke-width="1.75"/>
<circle cx="1765.1" cy="1023.1" r="4.7" fill="#eac4cb" fill-opacity="0.95" stroke="#cf6676" stroke-width="1.75"/>
<circle cx="1766.1" cy="1028.8" r="4.7" fill="#eac4cb" fill-opacity="0.95" stroke="#cf6676" stroke-width="1.75"/>
<circle cx="1770.8" cy="1038.3" r="4.7" fill="#eac4cb" fill-opacity="0.95" stroke="#cf6676" stroke-width="1.75"/>
<circle cx="1775.6" cy="1049.7" r="4.7" fill="#eac4cb" fill-opacity="0.95" stroke="#cf6676" stroke-width="1.75"/>
<circle cx="1849.7" cy="1022.7" r="4.7" fill="#eac4cb" fill-opacity="0.95" stroke="#cf6676" stroke-width="1.75"/>
<circle cx="1602.4" cy="1054.4" r="4.7" fill="#eac4cb" fill-opacity="0.95" stroke="#cf6676" stroke-width="1.75"/>
<circle cx="1609.6" cy="1059.2" r="4.7" fill="#efd9de" fill-opacity="0.95" stroke="#d5747f" stroke-width="1.75"/>
<circle cx="1613.2" cy="1067.6" r="4.7" fill="#eac4cb" fill-opacity="0.95" stroke="#cf6676" stroke-width="1.75"/>
<circle cx="1602.0" cy="1070.4" r="4.7" fill="#eac4cb" fill-opacity="0.95" stroke="#cf6676" stroke-width="1.75"/>
<circle cx="1605.6" cy="1076.0" r="4.7" fill="#eac4cb" fill-opacity="0.95" stroke="#cf6676" stroke-width="1.75"/>
<circle cx="1612.4" cy="1078.8" r="4.7" fill="#f4b9b5" fill-opacity="0.95" stroke="#e05a52" stroke-width="1.75"/>
<circle cx="1630.4" cy="1061.6" r="4.7" fill="#eac4cb" fill-opacity="0.95" stroke="#cf6676" stroke-width="1.75"/>
<circle cx="1622.8" cy="1080.8" r="4.7" fill="#eac4cb" fill-opacity="0.95" stroke="#cf6676" stroke-width="1.75"/>
<circle cx="1621.2" cy="1088.0" r="4.7" fill="#eac4cb" fill-opacity="0.95" stroke="#cf6676" stroke-width="1.75"/>
<circle cx="1632.8" cy="1087.6" r="4.7" fill="#d6b2b6" fill-opacity="0.95" stroke="#c56c76" stroke-width="1.75"/>
<circle cx="1576.0" cy="1089.6" r="4.7" fill="#eac4cb" fill-opacity="0.95" stroke="#cf6676" stroke-width="1.75"/>
<circle cx="1596.8" cy="1094.8" r="4.7" fill="#eac4cb" fill-opacity="0.95" stroke="#cf6676" stroke-width="1.75"/>
<circle cx="1602.0" cy="1099.2" r="4.7" fill="#eac4cb" fill-opacity="0.95" stroke="#cf6676" stroke-width="1.75"/>
<circle cx="1612.4" cy="1108.8" r="4.7" fill="#eac4cb" fill-opacity="0.95" stroke="#cf6676" stroke-width="1.75"/>
<circle cx="1636.8" cy="1105.6" r="4.7" fill="#eac4cb" fill-opacity="0.95" stroke="#cf6676" stroke-width="1.75"/>
<circle cx="1655.2" cy="1060.8" r="4.7" fill="#eac4cb" fill-opacity="0.95" stroke="#cf6676" stroke-width="1.75"/>
<circle cx="1660.0" cy="1063.2" r="4.7" fill="#eac4cb" fill-opacity="0.95" stroke="#cf6676" stroke-width="1.75"/>
<circle cx="1664.8" cy="1056.0" r="4.7" fill="#eac4cb" fill-opacity="0.95" stroke="#cf6676" stroke-width="1.75"/>
<circle cx="1654.4" cy="1068.8" r="4.7" fill="#eac4cb" fill-opacity="0.95" stroke="#cf6676" stroke-width="1.75"/>
<circle cx="1640.0" cy="1078.4" r="4.7" fill="#eac4cb" fill-opacity="0.95" stroke="#cf6676" stroke-width="1.75"/>
<circle cx="1641.6" cy="1083.2" r="4.7" fill="#eac4cb" fill-opacity="0.95" stroke="#cf6676" stroke-width="1.75"/>
<circle cx="1657.6" cy="1090.4" r="4.7" fill="#eac4cb" fill-opacity="0.95" stroke="#cf6676" stroke-width="1.75"/>
<circle cx="1646.4" cy="1098.4" r="4.7" fill="#eac4cb" fill-opacity="0.95" stroke="#cf6676" stroke-width="1.75"/>
<circle cx="1654.4" cy="1100.0" r="4.7" fill="#eac4cb" fill-opacity="0.95" stroke="#cf6676" stroke-width="1.75"/>
<circle cx="1667.6" cy="1092.8" r="4.7" fill="#eac4cb" fill-opacity="0.95" stroke="#cf6676" stroke-width="1.75"/>
<circle cx="1666.8" cy="1101.2" r="4.7" fill="#eac4cb" fill-opacity="0.95" stroke="#cf6676" stroke-width="1.75"/>
<circle cx="1686.4" cy="1090.8" r="4.7" fill="#eac4cb" fill-opacity="0.95" stroke="#cf6676" stroke-width="1.75"/>
<circle cx="1693.6" cy="1068.4" r="4.7" fill="#eac4cb" fill-opacity="0.95" stroke="#cf6676" stroke-width="1.75"/>
<circle cx="1699.2" cy="1076.4" r="4.7" fill="#eac4cb" fill-opacity="0.95" stroke="#cf6676" stroke-width="1.75"/>
<circle cx="1714.0" cy="1054.4" r="4.7" fill="#eac4cb" fill-opacity="0.95" stroke="#cf6676" stroke-width="1.75"/>
<circle cx="1736.0" cy="1053.4" r="4.7" fill="#eac4cb" fill-opacity="0.95" stroke="#cf6676" stroke-width="1.75"/>
<circle cx="1743.3" cy="1051.2" r="4.7" fill="#eac4cb" fill-opacity="0.95" stroke="#cf6676" stroke-width="1.75"/>
<circle cx="1725.2" cy="1070.0" r="4.7" fill="#eac4cb" fill-opacity="0.95" stroke="#cf6676" stroke-width="1.75"/>
<circle cx="1710.0" cy="1068.4" r="4.7" fill="#eac4cb" fill-opacity="0.95" stroke="#cf6676" stroke-width="1.75"/>
<circle cx="1717.6" cy="1075.2" r="4.7" fill="#eac4cb" fill-opacity="0.95" stroke="#cf6676" stroke-width="1.75"/>
<circle cx="1728.1" cy="1075.8" r="4.7" fill="#eac4cb" fill-opacity="0.95" stroke="#cf6676" stroke-width="1.75"/>
<circle cx="1728.8" cy="1083.0" r="4.7" fill="#eac4cb" fill-opacity="0.95" stroke="#cf6676" stroke-width="1.75"/>
<circle cx="1715.1" cy="1085.9" r="4.7" fill="#eac4cb" fill-opacity="0.95" stroke="#cf6676" stroke-width="1.75"/>
<circle cx="1700.8" cy="1097.6" r="4.7" fill="#eac4cb" fill-opacity="0.95" stroke="#cf6676" stroke-width="1.75"/>
<circle cx="1706.4" cy="1097.4" r="4.7" fill="#eac4cb" fill-opacity="0.95" stroke="#cf6676" stroke-width="1.75"/>
<circle cx="1648.7" cy="1117.6" r="4.7" fill="#eac4cb" fill-opacity="0.95" stroke="#cf6676" stroke-width="1.75"/>
<circle cx="1668.2" cy="1133.5" r="4.7" fill="#eac4cb" fill-opacity="0.95" stroke="#cf6676" stroke-width="1.75"/>
<circle cx="1676.8" cy="1135.7" r="4.7" fill="#efd9de" fill-opacity="0.95" stroke="#d5747f" stroke-width="1.75"/>
<circle cx="1469.7" cy="1082.5" r="4.7" fill="#eac4cb" fill-opacity="0.95" stroke="#cf6676" stroke-width="1.75"/>
<circle cx="1499.4" cy="1094.2" r="4.7" fill="#eac4cb" fill-opacity="0.95" stroke="#cf6676" stroke-width="1.75"/>
<circle cx="1388.7" cy="1106.8" r="4.7" fill="#eac4cb" fill-opacity="0.95" stroke="#cf6676" stroke-width="1.75"/>
<circle cx="1377.0" cy="1112.2" r="4.7" fill="#eac4cb" fill-opacity="0.95" stroke="#cf6676" stroke-width="1.75"/>
<circle cx="1389.6" cy="1120.3" r="4.7" fill="#eac4cb" fill-opacity="0.95" stroke="#cf6676" stroke-width="1.75"/>
<circle cx="1381.5" cy="1124.8" r="4.7" fill="#eac4cb" fill-opacity="0.95" stroke="#cf6676" stroke-width="1.75"/>
<circle cx="1428.3" cy="1132.9" r="4.7" fill="#eac4cb" fill-opacity="0.95" stroke="#cf6676" stroke-width="1.75"/>
<circle cx="1414.8" cy="1146.4" r="4.7" fill="#eac4cb" fill-opacity="0.95" stroke="#cf6676" stroke-width="1.75"/>
<circle cx="1405.8" cy="1150.9" r="4.7" fill="#eac4cb" fill-opacity="0.95" stroke="#cf6676" stroke-width="1.75"/>
<circle cx="1457.1" cy="1166.2" r="4.7" fill="#eac4cb" fill-opacity="0.95" stroke="#cf6676" stroke-width="1.75"/>
<circle cx="1559.0" cy="1085.7" r="4.7" fill="#efd9de" fill-opacity="0.95" stroke="#d5747f" stroke-width="1.75"/>
<circle cx="1577.0" cy="1117.0" r="4.7" fill="#eac4cb" fill-opacity="0.95" stroke="#cf6676" stroke-width="1.75"/>
<circle cx="1571.3" cy="1108.5" r="4.7" fill="#eac4cb" fill-opacity="0.95" stroke="#cf6676" stroke-width="1.75"/>
<circle cx="1628.3" cy="1114.2" r="4.7" fill="#eac4cb" fill-opacity="0.95" stroke="#cf6676" stroke-width="1.75"/>
<circle cx="1540.9" cy="1141.7" r="4.7" fill="#eac4cb" fill-opacity="0.95" stroke="#cf6676" stroke-width="1.75"/>
<circle cx="1548.5" cy="1138.9" r="4.7" fill="#eac4cb" fill-opacity="0.95" stroke="#cf6676" stroke-width="1.75"/>
<circle cx="1541.9" cy="1153.1" r="4.7" fill="#eac4cb" fill-opacity="0.95" stroke="#cf6676" stroke-width="1.75"/>
<circle cx="1570.4" cy="1139.8" r="4.7" fill="#d6b2b6" fill-opacity="0.95" stroke="#c56c76" stroke-width="1.75"/>
<circle cx="1600.8" cy="1139.8" r="4.7" fill="#eac4cb" fill-opacity="0.95" stroke="#cf6676" stroke-width="1.75"/>
<circle cx="1633.1" cy="1143.6" r="4.7" fill="#eac4cb" fill-opacity="0.95" stroke="#cf6676" stroke-width="1.75"/>
<circle cx="1640.7" cy="1150.3" r="4.7" fill="#eac4cb" fill-opacity="0.95" stroke="#cf6676" stroke-width="1.75"/>
<circle cx="1620.7" cy="1153.1" r="4.7" fill="#eac4cb" fill-opacity="0.95" stroke="#cf6676" stroke-width="1.75"/>
<circle cx="1546.6" cy="1175.0" r="4.7" fill="#eac4cb" fill-opacity="0.95" stroke="#cf6676" stroke-width="1.75"/>
<circle cx="1546.6" cy="1183.5" r="4.7" fill="#eac4cb" fill-opacity="0.95" stroke="#cf6676" stroke-width="1.75"/>
<circle cx="1590.3" cy="1170.2" r="4.7" fill="#eac4cb" fill-opacity="0.95" stroke="#cf6676" stroke-width="1.75"/>
<circle cx="1585.6" cy="1183.5" r="4.7" fill="#eac4cb" fill-opacity="0.95" stroke="#cf6676" stroke-width="1.75"/>
<circle cx="1597.9" cy="1185.4" r="4.7" fill="#eac4cb" fill-opacity="0.95" stroke="#cf6676" stroke-width="1.75"/>
<circle cx="1603.6" cy="1173.1" r="4.7" fill="#eac4cb" fill-opacity="0.95" stroke="#cf6676" stroke-width="1.75"/>
<circle cx="1607.4" cy="1182.6" r="4.7" fill="#eac4cb" fill-opacity="0.95" stroke="#cf6676" stroke-width="1.75"/>
<circle cx="1625.5" cy="1179.7" r="4.7" fill="#eac4cb" fill-opacity="0.95" stroke="#cf6676" stroke-width="1.75"/>
<circle cx="1637.8" cy="1182.6" r="4.7" fill="#eac4cb" fill-opacity="0.95" stroke="#cf6676" stroke-width="1.75"/>
<circle cx="1651.1" cy="1187.3" r="4.7" fill="#eac4cb" fill-opacity="0.95" stroke="#cf6676" stroke-width="1.75"/>
<circle cx="1652.0" cy="1194.9" r="4.7" fill="#eac4cb" fill-opacity="0.95" stroke="#cf6676" stroke-width="1.75"/>
<circle cx="1666.3" cy="1216.8" r="4.7" fill="#eac4cb" fill-opacity="0.95" stroke="#cf6676" stroke-width="1.75"/>
<circle cx="1380.1" cy="1022.7" r="4.7" fill="#e6c0dc" fill-opacity="0.95" stroke="#b257ad" stroke-width="1.75"/>
<circle cx="1377.6" cy="1043.0" r="4.7" fill="#e6c0dc" fill-opacity="0.95" stroke="#b257ad" stroke-width="1.75"/>
<circle cx="1738.9" cy="1020.3" r="4.7" fill="#e6c0dc" fill-opacity="0.95" stroke="#b257ad" stroke-width="1.75"/>
<circle cx="1757.9" cy="1018.4" r="4.7" fill="#e6c0dc" fill-opacity="0.95" stroke="#b257ad" stroke-width="1.75"/>
<circle cx="1578.4" cy="1050.0" r="4.7" fill="#e6c0dc" fill-opacity="0.95" stroke="#b257ad" stroke-width="1.75"/>
<circle cx="1627.6" cy="1070.4" r="4.7" fill="#e6c0dc" fill-opacity="0.95" stroke="#b257ad" stroke-width="1.75"/>
<circle cx="1596.8" cy="1108.0" r="4.7" fill="#e6c0dc" fill-opacity="0.95" stroke="#b257ad" stroke-width="1.75"/>
<circle cx="1664.0" cy="1063.2" r="4.7" fill="#e6c0dc" fill-opacity="0.95" stroke="#b257ad" stroke-width="1.75"/>
<circle cx="1671.2" cy="1061.6" r="4.7" fill="#e6c0dc" fill-opacity="0.95" stroke="#b257ad" stroke-width="1.75"/>
<circle cx="1647.6" cy="1076.4" r="4.7" fill="#e6c0dc" fill-opacity="0.95" stroke="#b257ad" stroke-width="1.75"/>
<circle cx="1656.4" cy="1084.0" r="4.7" fill="#e6c0dc" fill-opacity="0.95" stroke="#b257ad" stroke-width="1.75"/>
<circle cx="1650.4" cy="1090.4" r="4.7" fill="#e6c0dc" fill-opacity="0.95" stroke="#b257ad" stroke-width="1.75"/>
<circle cx="1697.2" cy="1045.6" r="4.7" fill="#e6c0dc" fill-opacity="0.95" stroke="#b257ad" stroke-width="1.75"/>
<circle cx="1711.2" cy="1044.0" r="4.7" fill="#e6c0dc" fill-opacity="0.95" stroke="#b257ad" stroke-width="1.75"/>
<circle cx="1711.2" cy="1091.2" r="4.7" fill="#e6c0dc" fill-opacity="0.95" stroke="#b257ad" stroke-width="1.75"/>
<circle cx="1688.0" cy="1106.4" r="4.7" fill="#e6c0dc" fill-opacity="0.95" stroke="#b257ad" stroke-width="1.75"/>
<circle cx="1450.8" cy="1092.4" r="4.7" fill="#e6c0dc" fill-opacity="0.95" stroke="#b257ad" stroke-width="1.75"/>
<circle cx="1498.5" cy="1108.2" r="4.7" fill="#e6c0dc" fill-opacity="0.95" stroke="#b257ad" stroke-width="1.75"/>
<circle cx="1386.9" cy="1111.3" r="4.7" fill="#e6c0dc" fill-opacity="0.95" stroke="#b257ad" stroke-width="1.75"/>
<circle cx="1378.8" cy="1119.4" r="4.7" fill="#e6c0dc" fill-opacity="0.95" stroke="#b257ad" stroke-width="1.75"/>
<circle cx="1411.2" cy="1150.9" r="4.7" fill="#e6c0dc" fill-opacity="0.95" stroke="#b257ad" stroke-width="1.75"/>
<circle cx="1414.8" cy="1162.6" r="4.7" fill="#e6c0dc" fill-opacity="0.95" stroke="#b257ad" stroke-width="1.75"/>
<circle cx="1542.8" cy="1146.5" r="4.7" fill="#e6c0dc" fill-opacity="0.95" stroke="#b257ad" stroke-width="1.75"/>
<circle cx="1552.3" cy="1162.6" r="4.7" fill="#e6c0dc" fill-opacity="0.95" stroke="#b257ad" stroke-width="1.75"/>
<circle cx="1636.9" cy="1154.1" r="4.7" fill="#e6c0dc" fill-opacity="0.95" stroke="#b257ad" stroke-width="1.75"/>
<circle cx="1616.0" cy="1158.8" r="4.7" fill="#e6c0dc" fill-opacity="0.95" stroke="#b257ad" stroke-width="1.75"/>
<circle cx="1562.8" cy="1188.3" r="4.7" fill="#e6c0dc" fill-opacity="0.95" stroke="#b257ad" stroke-width="1.75"/>
</g>
<circle cx="1195.3" cy="1276.5" r="8.8" fill="#fff" stroke="#c4c4c4" stroke-width="1.5"/>
<path d="M1192 1281 L1192.8 1276 Q1195 1272.5 1198.6 1273.5 Q1199 1277.8 1195 1279.5 Z" fill="#cacaca"/>
<text x="1207.5" y="1282.6" font-size="14.5" font-weight="bold" fill="#fff" stroke="#c6c6c6" stroke-width="1.6" paint-order="stroke" letter-spacing="0.9" font-family="Liberation Sans, sans-serif">mapbox</text>
<circle cx="1857.9" cy="1274.3" r="9.3" fill="#000"/>
<circle cx="1857.6" cy="1269.6" r="1.6" fill="#fff"/>
<path d="M1857.8 1273.6 V1280.2" stroke="#fff" stroke-width="3.2" stroke-linecap="round"/>
<rect x="1836.2" y="855.2" width="37.2" height="77.2" rx="6" fill="#fff" stroke="#e4e4e4" stroke-width="2.4"/>
<rect x="1837.4" y="893.8" width="34.8" height="1.2" fill="#e4e4e4"/>
<path d="M1848.6 874.9 H1860.4 M1854.5 868.9 V880.9" stroke="#2f2f2f" stroke-width="3.9" stroke-linecap="round"/>
<path d="M1848.4 912.9 H1861.4" stroke="#2f2f2f" stroke-width="3.9" stroke-linecap="round"/>
</svg>
</body></html>
